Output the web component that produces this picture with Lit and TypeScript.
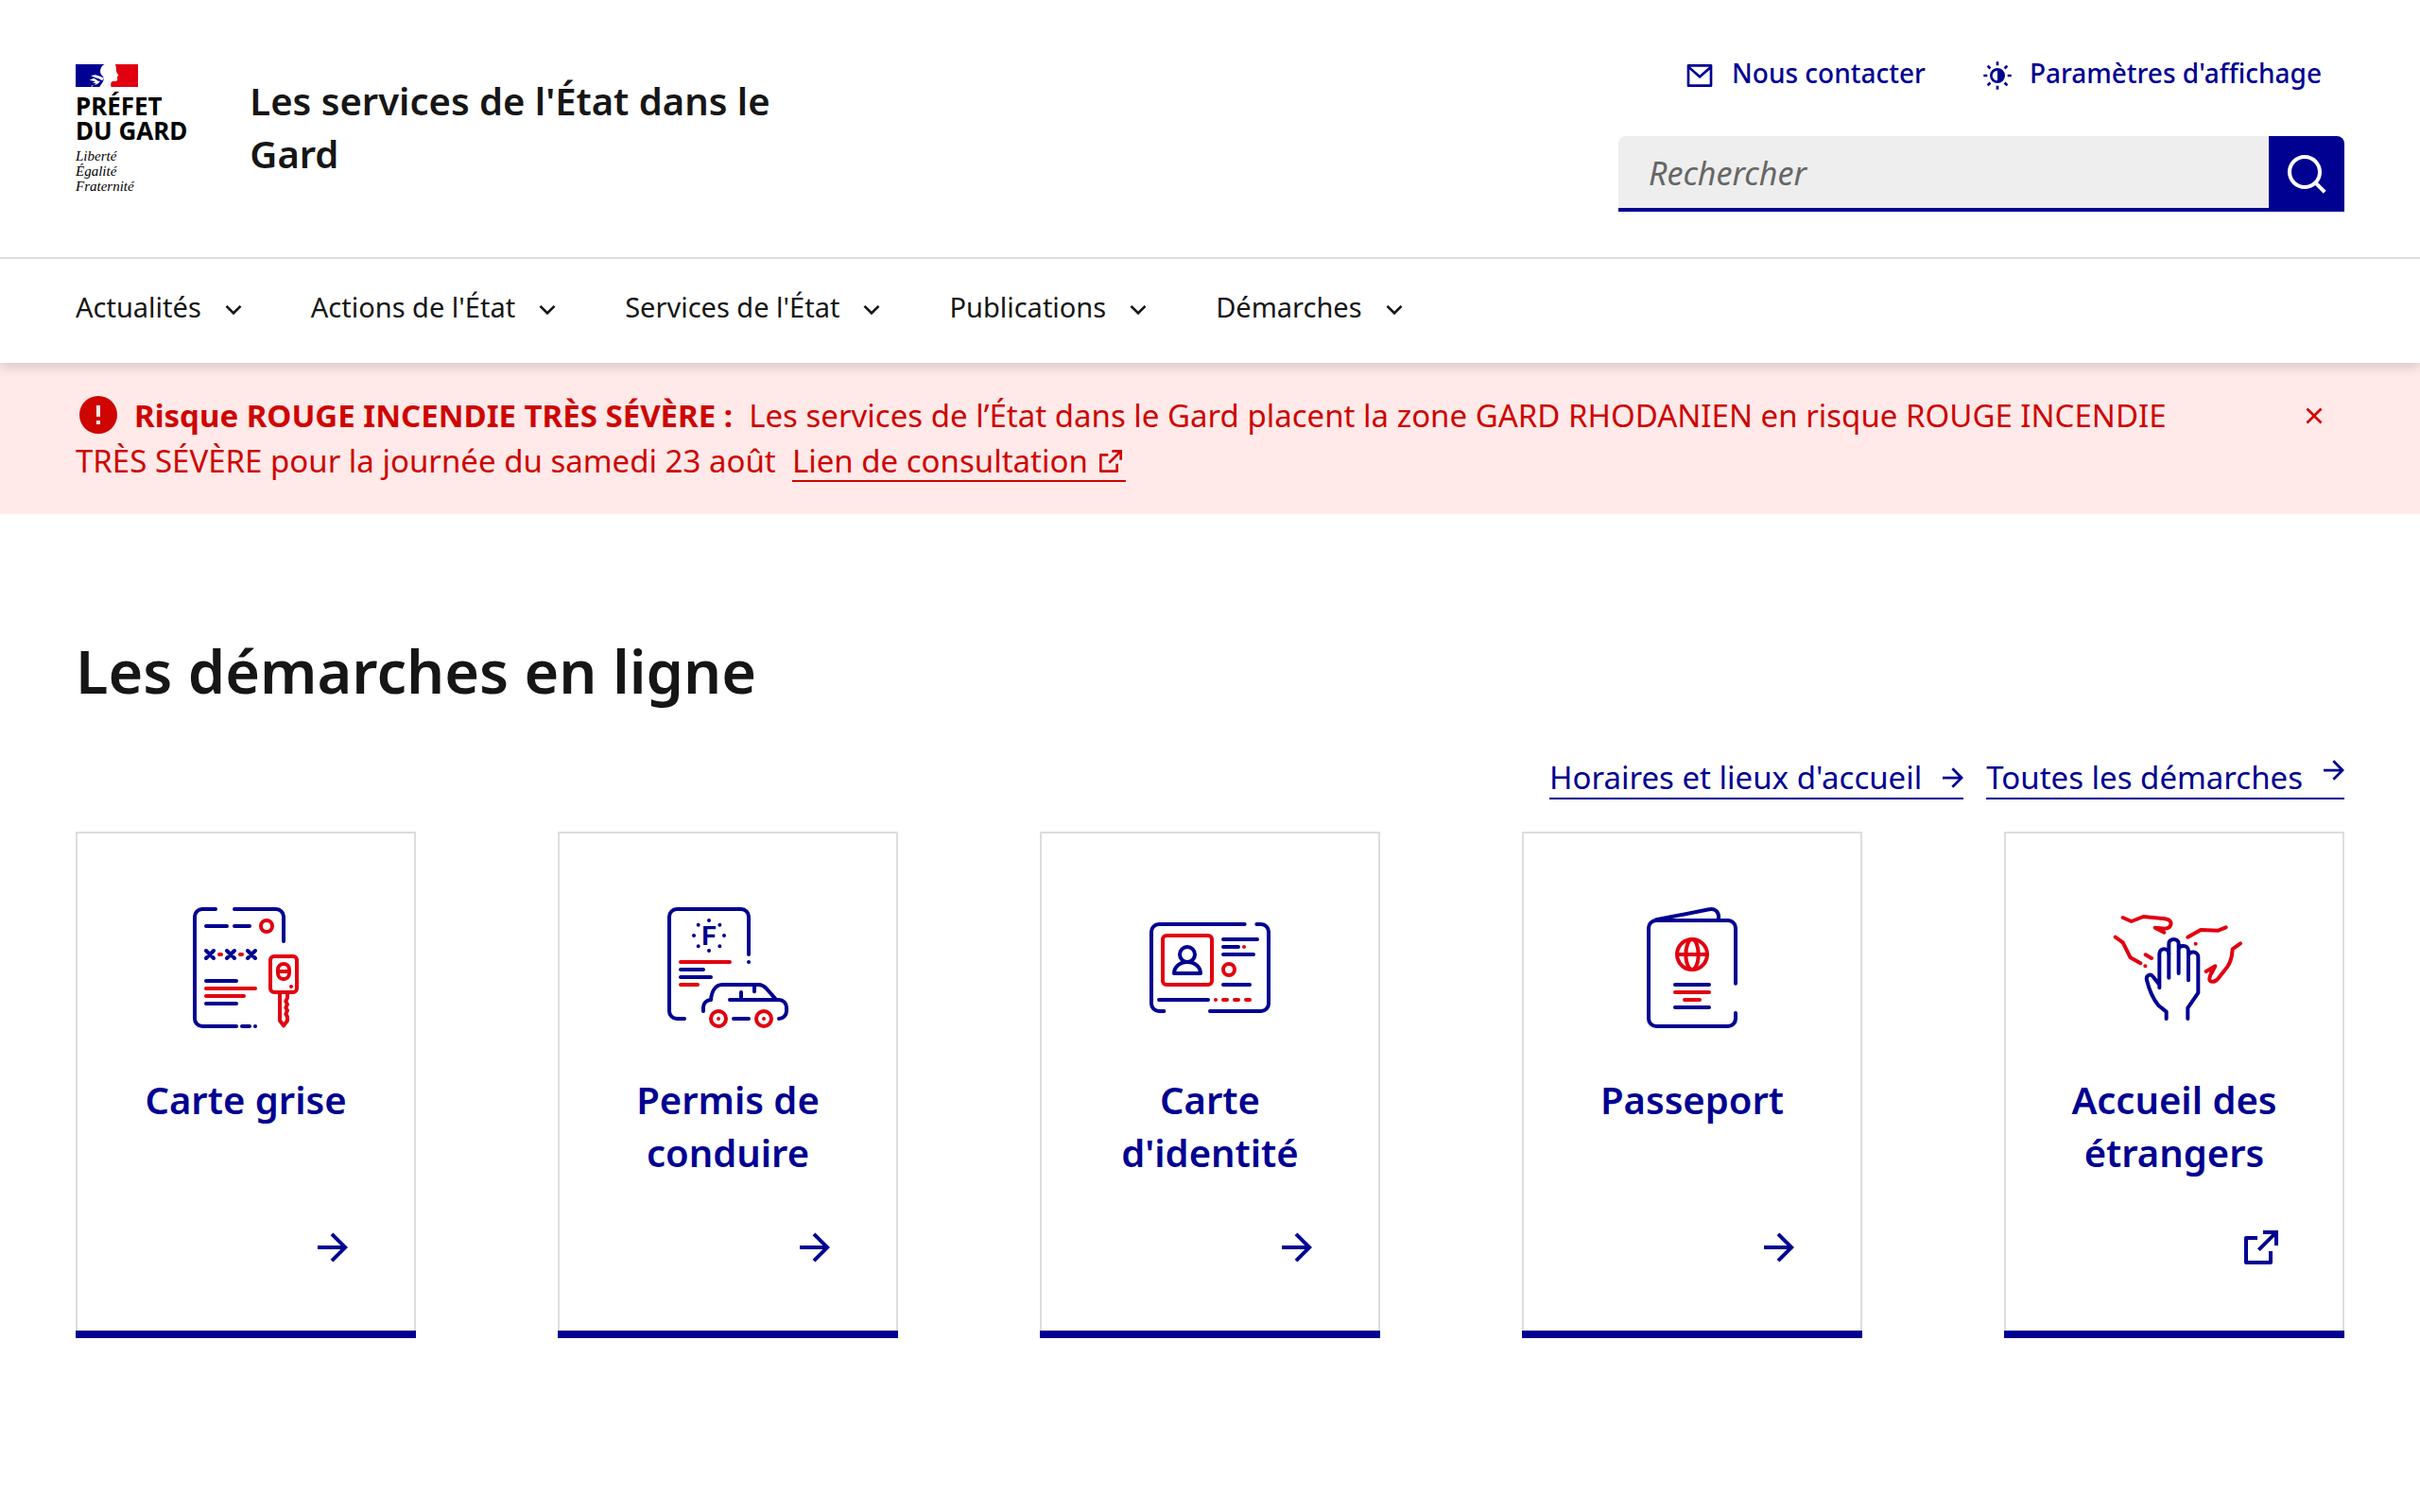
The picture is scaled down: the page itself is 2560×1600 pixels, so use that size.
import { LitElement, html, svg, css, nothing } from 'lit';
import type { TemplateResult, SVGTemplateResult } from 'lit';
import { customElement, property, state } from 'lit/decorators.js';
import { classMap } from 'lit/directives/class-map.js';

/* ---------- interface icons (24 unit grid) ---------- */
const ICONS: Record<string, string> = {
  mail: 'M3 3h18a1 1 0 0 1 1 1v16a1 1 0 0 1-1 1H3a1 1 0 0 1-1-1V4a1 1 0 0 1 1-1zm17 4.238l-7.928 7.1L4 7.216V19h16V7.238zM4.511 5l7.55 6.662L19.502 5H4.511z',
  theme:
    'M12 18a6 6 0 1 1 0-12 6 6 0 0 1 0 12zM12 8a4 4 0 1 0 0 8zM11 1h2v3h-2V1zm0 19h2v3h-2v-3zM3.515 4.929l1.414-1.414L7.05 5.636 5.636 7.05 3.515 4.93zM16.95 18.364l1.414-1.414 2.121 2.121-1.414 1.414-2.121-2.121zm2.121-14.85l1.414 1.415-2.121 2.121-1.414-1.414 2.121-2.121zM5.636 16.95l1.414 1.414-2.121 2.121-1.414-1.414 2.121-2.121zM23 11v2h-3v-2h3zM4 11v2H1v-2h3z',
  search:
    'M18.031 16.617l4.283 4.282-1.415 1.415-4.282-4.283A8.96 8.96 0 0 1 11 20c-4.968 0-9-4.032-9-9s4.032-9 9-9 9 4.032 9 9a8.96 8.96 0 0 1-1.969 5.617zm-2.006-.742A6.977 6.977 0 0 0 18 11c0-3.868-3.133-7-7-7-3.868 0-7 3.132-7 7 0 3.867 3.132 7 7 7a6.977 6.977 0 0 0 4.875-1.975l.15-.15z',
  chevron: 'M12 13.172l4.95-4.95 1.414 1.414L12 16 5.636 9.636 7.05 8.222z',
  arrow: 'M16.172 11l-5.364-5.364 1.414-1.414L20 12l-7.778 7.778-1.414-1.414L16.172 13H4v-2z',
  close:
    'M12 10.586l4.95-4.95 1.414 1.414-4.95 4.95 4.95 4.95-1.414 1.414-4.95-4.95-4.95 4.95-1.414-1.414 4.95-4.95-4.95-4.95L7.05 5.636z',
  external:
    'M10 6v2H5v11h11v-5h2v6a1 1 0 0 1-1 1H4a1 1 0 0 1-1-1V7a1 1 0 0 1 1-1h6zM21 3v8h-2V6.4L11.4 14 10 12.6 17.6 5H13V3z',
  alert: 'M12 22a10 10 0 1 1 0-20 10 10 0 0 1 0 20zM11 15v2h2v-2zM11 7v6h2V7z',
};

const icon = (name: string, cls: string, viewBox = '0 0 24 24') =>
  html`<svg class="icon ${cls}" viewBox=${viewBox} aria-hidden="true"><path fill="currentColor" fill-rule="evenodd" d=${ICONS[name]}></path></svg>`;

/* ---------- two-colour pictograms (480 unit grid) ---------- */
const PICTOS: Record<string, { viewBox: string; art: SVGTemplateResult }> = {
  registration: {
    viewBox: '-30 12 480 480',
    art: svg`
      <g class="blue">
        <path d="M114 66H72a24 24 0 0 0-24 24V414a24 24 0 0 0 24 24H180M198 438h24M240 438h.1M174 66H306a24 24 0 0 1 24 24V168" />
        <path d="M84 120h66M174 120h48M84 294h96M84 366h96" />
        <path d="M84 198l24 24m0-24l-24 24M150 198l24 24m0-24l-24 24M216 198l24 24m0-24l-24 24" />
      </g>
      <g class="red">
        <circle cx="276" cy="120" r="18" />
        <path d="M126 210h6M192 210h6M84 318h156M84 342h120" />
        <rect x="288" y="216" width="84" height="114" rx="12" />
        <rect x="312" y="240" width="36" height="48" rx="18" />
        <path d="M312 264h36M354 312h.1M318 334V420l12 16 12-16v-12l-5-9 5-11-5-9 5-11-5-9 5-11V334" />
      </g>`,
  },
  licence: {
    viewBox: '0 12 480 480',
    art: svg`
      <g class="blue">
        <path d="M102 414H78a24 24 0 0 1-24-24V90a24 24 0 0 1 24-24H282a24 24 0 0 1 24 24V210M306 234h.1" />
        <path d="M180 102h.1M214 116h.1M228 150h.1M214 184h.1M180 198h.1M146 184h.1M132 150h.1M146 116h.1" />
        <path d="M90 258h72M90 282h96" />
        <path d="M162 390v-12a24 24 0 0 1 24-24C188 330 198 306 224 306H338c12 0 18 6 24 12L390 350" />
        <path d="M246 354H402a24 24 0 0 1 24 24v12a24 24 0 0 1-24 24M258 414h48M282 330v18M324 310v18" />
      </g>
      <text class="letter" x="157" y="180">F</text>
      <g class="red">
        <path d="M90 234h156M90 306h54M210 414h.1M354 414h.1" />
        <circle cx="210" cy="414" r="24" />
        <circle cx="354" cy="414" r="24" />
      </g>`,
  },
  identity: {
    viewBox: '0 -18 480 480',
    art: svg`
      <g class="blue">
        <path d="M94 360H78a24 24 0 0 1-24-24V108a24 24 0 0 1 24-24H350M388 84h14a24 24 0 0 1 24 24V336a24 24 0 0 1-24 24H240" />
        <circle cx="168" cy="180" r="24" />
        <path d="M126 240c0-20 18-36 42-36s42 16 42 36z" />
        <path d="M282 132h108M282 156h48M282 180h96M282 276h84M78 324h156" />
      </g>
      <g class="red">
        <rect x="90" y="120" width="156" height="156" rx="12" />
        <circle cx="300" cy="228" r="18" />
        <path d="M348 156h.1M258 324h.1M282 324h12M318 324h12M354 324h12" />
      </g>`,
  },
  passport: {
    viewBox: '-30 12 480 480',
    art: svg`
      <g class="blue">
        <path d="M348 302V126a24 24 0 0 0-24-24H96a24 24 0 0 0-24 24V414a24 24 0 0 0 24 24H324a24 24 0 0 0 24-24V396" />
        <path d="M96 100L264 67c18-4 30 8 30 22v12M156 306h108M156 378h108" />
      </g>
      <g class="red">
        <circle cx="210" cy="210" r="48" />
        <ellipse cx="210" cy="210" rx="20" ry="48" />
        <path d="M162 210h96M156 330h108M186 354h48" />
      </g>`,
  },
  welcome: {
    viewBox: '0 -18 480 480',
    art: svg`
      <g class="blue">
        <path d="M215 384V362L190 342C170 318 160 290 153 262C149 245 166 240 172 250L193 276M193 286V178C193 158 223 158 223 178V254" />
        <path d="M223 178V146C223 127 254 127 254 146V240M254 166C254 148 285 148 285 168V262M285 186C285 168 316 168 316 188V302L283 350V384" />
      </g>
      <g class="red">
        <path d="M77 63L104 75L142 60L206 66C226 68 232 76 229 86C226 96 216 98 208 98L179 95L208 110" />
        <path d="M53 125L77 142L101 190L133 208M148 217h.1M149 181L168 192M283 125L324 102L380 104L404 94M308 146h.1" />
        <path d="M450 145L425 163C424 190 420 204 408 220L380 256C366 272 350 268 352 256C353 248 358 240 360 230M341 234L370 217L358 240" />
      </g>`,
  },
};

interface Tile {
  title: string;
  picto: string;
  external?: boolean;
}

const TILES: Tile[] = [
  { title: 'Carte grise', picto: 'registration' },
  { title: 'Permis de conduire', picto: 'licence' },
  { title: "Carte d'identité", picto: 'identity' },
  { title: 'Passeport', picto: 'passport' },
  { title: 'Accueil des étrangers', picto: 'welcome', external: true },
];

const MENU = ['Actualités', "Actions de l'État", "Services de l'État", 'Publications', 'Démarches'];

const base = css`
  :host {
    --blue: #000091;
    --red: #e1000f;
    --text: #161616;
    --line: #dddddd;
    display: block;
    color: var(--text);
    font-family: 'Noto Sans', 'Open Sans', sans-serif;
  }
  * {
    box-sizing: border-box;
  }
  a {
    color: inherit;
    text-decoration: none;
  }
  ul {
    list-style: none;
    margin: 0;
    padding: 0;
  }
  button {
    border: 0;
    padding: 0;
    background: none;
    color: inherit;
    font: inherit;
    cursor: pointer;
  }
  .icon {
    display: block;
    flex: none;
  }
  .icon-md {
    width: 32px;
    height: 32px;
  }
  .icon-lg {
    width: 48px;
    height: 48px;
  }
`;

@customElement('site-brand')
class SiteBrand extends LitElement {
  static styles = [
    base,
    css`
      .brand {
        display: flex;
        align-items: center;
        gap: 66px;
      }
      .flag {
        display: block;
        width: 66px;
        height: 24px;
        margin-bottom: 7px;
      }
      .entity {
        margin: 0;
        color: #000;
        font-size: 26px;
        font-weight: 700;
        line-height: 26px;
        white-space: nowrap;
      }
      .motto {
        margin: 6px 0 0;
        color: #000;
        font-family: 'Liberation Serif', serif;
        font-size: 15px;
        font-style: italic;
        line-height: 16px;
      }
      .service {
        max-width: 600px;
        margin: 0;
        padding-bottom: 4px;
        font-size: 40px;
        font-weight: 600;
        line-height: 56px;
      }
    `,
  ];

  render() {
    return html`
      <a class="brand" href="#accueil">
        <div>
          <svg class="flag" viewBox="0 0 198 72" aria-hidden="true">
            <path fill="#fff" d="M0 0h198v72H0z" />
            <path fill="#000091" d="M0 0H92C80 6 77 18 79 28C81 36 90 38 89 48C88 58 80 64 76 72H0z" />
            <path
              fill="#fff"
              d="M48 36L62 34L78 38L90 44L84 52L74 46L62 42zM44 50L58 44L70 52L60 54zM54 60L66 52L78 54L70 62L60 66L64 60zM48 69L58 66L52 71z"
            />
            <path
              fill="#e1000f"
              d="M126 0H198V72H113C110 64 112 55 118 54C126 55 132 54 133 48C131 45 133 42 132 40L136 35C134 30 129 27 129 20C130 12 127 5 126 0z"
            />
          </svg>
          <p class="entity">PRÉFET<br />DU GARD</p>
          <p class="motto">Liberté<br />Égalité<br />Fraternité</p>
        </div>
        <p class="service">Les services de l'État dans le Gard</p>
      </a>
    `;
  }
}

@customElement('site-header')
class SiteHeader extends LitElement {
  static styles = [
    base,
    css`
      .header {
        position: relative;
        z-index: 1;
        background: #fff;
        box-shadow: 0 4px 12px rgba(0, 0, 18, 0.16);
      }
      .top {
        display: flex;
        justify-content: space-between;
        align-items: flex-start;
        padding: 56px 80px 48px;
        border-bottom: 2px solid var(--line);
      }
      .brand {
        padding-top: 12px;
      }
      .tools {
        flex: 0 1 32%;
        display: flex;
        flex-direction: column;
        gap: 40px;
      }
      .shortcuts {
        display: flex;
        justify-content: flex-end;
        gap: 60px;
        padding-right: 24px;
        color: var(--blue);
        font-size: 28px;
        font-weight: 500;
        line-height: 48px;
        white-space: nowrap;
      }
      .shortcut {
        display: flex;
        align-items: center;
        gap: 18px;
        height: 48px;
      }
      .label {
        padding-bottom: 6px;
      }
      .search {
        display: flex;
        height: 80px;
      }
      .field {
        flex: 1;
        min-width: 0;
        padding: 2px 32px 0;
        border: 0;
        border-bottom: 4px solid var(--blue);
        border-radius: 8px 0 0 0;
        background: #eeeeee;
        color: var(--text);
        font: 400 34px 'Noto Sans', sans-serif;
      }
      .field::placeholder {
        color: #666666;
        font-style: italic;
        opacity: 1;
      }
      .submit {
        display: grid;
        place-items: center;
        width: 80px;
        border-radius: 0 8px 0 0;
        background: var(--blue);
        color: #fff;
      }
      .menu {
        display: flex;
        gap: 66px;
        padding: 30px 80px 32px;
        font-size: 29px;
        line-height: 48px;
        white-space: nowrap;
      }
      .entry {
        display: flex;
        align-items: center;
        gap: 18px;
        height: 48px;
      }
    `,
  ];

  render() {
    return html`
      <header class="header">
        <div class="top">
          <site-brand class="brand"></site-brand>
          <div class="tools">
            <div class="shortcuts">
              <a class="shortcut" href="#contact">${icon('mail', 'icon-md')}<span class="label">Nous contacter</span></a>
              <button class="shortcut" type="button">
                ${icon('theme', 'icon-md')}<span class="label">Paramètres d'affichage</span>
              </button>
            </div>
            <form class="search" role="search" @submit=${(e: Event) => e.preventDefault()}>
              <input class="field" type="search" placeholder="Rechercher" aria-label="Rechercher" />
              <button class="submit" type="submit" aria-label="Rechercher">${icon('search', 'icon-lg')}</button>
            </form>
          </div>
        </div>
        <nav aria-label="Menu principal">
          <ul class="menu">
            ${MENU.map(
              (name) => html`<li>
                <button class="entry" type="button" aria-expanded="false">
                  <span class="label">${name}</span>${icon('chevron', 'icon-md')}
                </button>
              </li>`
            )}
          </ul>
        </nav>
      </header>
    `;
  }
}

@customElement('alert-notice')
class AlertNotice extends LitElement {
  static styles = [
    base,
    css`
      .notice {
        display: flex;
        align-items: flex-start;
        gap: 48px;
        padding: 32px 80px;
        background: #ffe9e9;
        color: #ce0500;
      }
      .body {
        flex: 1;
        margin: 0;
        font-size: 33px;
        line-height: 48px;
      }
      .title {
        font-weight: 700;
      }
      .sign {
        display: inline-block;
        width: 40px;
        height: 40px;
        margin: 0 18px 0 4px;
        vertical-align: -7px;
      }
      .link {
        padding-right: 4px;
        background: linear-gradient(currentColor, currentColor) 0 100% / 100% 2px no-repeat;
      }
      .out {
        display: inline-block;
        width: 24px;
        height: 24px;
        margin-left: 4px;
        vertical-align: 0;
      }
      .close {
        display: grid;
        place-items: center;
        width: 64px;
        height: 48px;
      }
    `,
  ];

  @state() private open = true;

  render() {
    if (!this.open) return nothing;
    return html`
      <div class="notice" role="alert">
        <p class="body">
          ${icon('alert', 'sign', '2 2 20 20')}<span class="title">Risque ROUGE INCENDIE TRÈS SÉVÈRE :&nbsp;</span> Les
          services de l’État dans le Gard placent la zone GARD RHODANIEN en risque ROUGE INCENDIE TRÈS SÉVÈRE pour la
          journée du samedi 23 août&nbsp;
          <a class="link" href="#consultation">Lien de consultation&nbsp;${icon('external', 'out', '3 3 18 18')}</a>
        </p>
        <button class="close" type="button" aria-label="Masquer le message" @click=${() => (this.open = false)}>
          ${icon('close', 'icon-md')}
        </button>
      </div>
    `;
  }
}

@customElement('service-tile')
class ServiceTile extends LitElement {
  static styles = [
    base,
    css`
      :host {
        display: grid;
        border-bottom: 8px solid var(--blue);
      }
      .tile {
        display: flex;
        flex-direction: column;
        padding: 62px 62px 64px;
        border: 2px solid var(--line);
        border-bottom: 0;
        color: var(--blue);
        text-align: center;
      }
      .picto {
        display: block;
        width: 160px;
        height: 160px;
        margin: 0 auto;
      }
      .picto .blue,
      .picto .red {
        fill: none;
        stroke-width: 12;
        stroke-linecap: round;
        stroke-linejoin: round;
      }
      .picto .blue {
        stroke: var(--blue);
      }
      .picto .red {
        stroke: var(--red);
      }
      .picto .letter {
        fill: var(--blue);
        font-family: Roboto, sans-serif;
        font-size: 84px;
        font-weight: 700;
      }
      .title {
        min-height: 112px;
        margin: 32px 0 48px;
        font-size: 40px;
        font-weight: 600;
        line-height: 56px;
      }
      .go {
        align-self: flex-end;
        margin-top: auto;
      }
    `,
  ];

  @property({ attribute: false }) tile!: Tile;

  render() {
    const picto = PICTOS[this.tile.picto];
    return html`
      <a class="tile" href="#${this.tile.picto}">
        <svg class="picto" viewBox=${picto.viewBox} aria-hidden="true">${picto.art}</svg>
        <h3 class="title">${this.tile.title}</h3>
        ${icon(this.tile.external ? 'external' : 'arrow', 'icon-lg go')}
      </a>
    `;
  }
}

@customElement('app-root')
class AppRoot extends LitElement {
  static styles = [
    base,
    css`
      :host {
        min-height: 100vh;
        background: #fff;
      }
      .content {
        padding: 126px 80px 184px;
      }
      .heading {
        margin: 0 0 50px;
        font-size: 63px;
        font-weight: 600;
        line-height: 80px;
      }
      .more {
        display: flex;
        justify-content: flex-end;
        gap: 24px;
        margin-bottom: 34px;
        color: var(--blue);
        font-size: 33px;
        line-height: 42px;
      }
      .more-link {
        display: flex;
        align-items: center;
        gap: 22px;
        padding-top: 2px;
        border-bottom: 2px solid currentColor;
      }
      .go {
        width: 22px;
        height: 22px;
      }
      .raised .go {
        margin-bottom: 16px;
      }
      .tiles {
        display: grid;
        grid-template-columns: repeat(5, 15%);
        justify-content: space-between;
      }
      .cell {
        display: grid;
      }
    `,
  ];

  private moreLink(label: string, raised = false): TemplateResult {
    return html`<a class=${classMap({ 'more-link': true, raised })} href="#demarches"
      >${label}${icon('arrow', 'go', '4 4 16 16')}</a
    >`;
  }

  render() {
    return html`
      <site-header></site-header>
      <alert-notice></alert-notice>
      <main class="content">
        <h2 class="heading">Les démarches en ligne</h2>
        <div class="more">
          ${this.moreLink("Horaires et lieux d'accueil")} ${this.moreLink('Toutes les démarches', true)}
        </div>
        <ul class="tiles">
          ${TILES.map((tile) => html`<li class="cell"><service-tile .tile=${tile}></service-tile></li>`)}
        </ul>
      </main>
    `;
  }
}
